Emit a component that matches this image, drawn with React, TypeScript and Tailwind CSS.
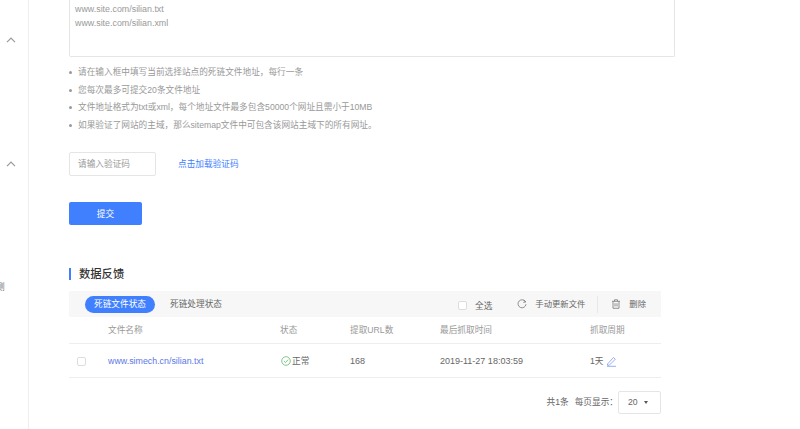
import React from "react";

function Box({ className = "" }: { className?: string }) {
  return <span className={"block w-[9px] h-[9px] rounded-[2px] border border-[#dddddd] bg-white " + className} />;
}

function Chevron() {
  return (
    <svg width="10" height="6" viewBox="0 0 10 6" fill="none" stroke="#999999" strokeWidth="1.2">
      <path d="M1 5.2 L5 1.2 L9 5.2" />
    </svg>
  );
}

const tips = [
  "请在输入框中填写当前选择站点的死链文件地址，每行一条",
  "您每次最多可提交20条文件地址",
  "文件地址格式为txt或xml，每个地址文件最多包含50000个网址且需小于10MB",
  "如果验证了网站的主域，那么sitemap文件中可包含该网站主域下的所有网址。",
];

export default function App() {
  return (
    <div className="flex h-[429px] w-[800px] overflow-hidden bg-white text-[8.67px] leading-[13px] text-[#666666] font-['Liberation_Sans','Noto_Sans_CJK_SC',sans-serif]">
      <aside className="w-[29px] shrink-0 border-r border-[#eeeeee] overflow-hidden">
        <div className="flex justify-center pr-[6px] pt-[37px]"><Chevron /></div>
        <div className="flex justify-center pr-[6px] pt-[118px]"><Chevron /></div>
        <div className="pt-[114px] -ml-[4px] text-[#777777]">测</div>
      </aside>

      <main className="w-[606px] ml-[40px]">
        <div className="h-[57px] border-x border-b border-[#e5e5e5] rounded-b-[2px] pl-[5px] pt-[2px] text-[#999999] text-[8.9px] leading-[14px]">
          <div>www.site.com/silian.txt</div>
          <div>www.site.com/silian.xml</div>
        </div>

        <ul className="pt-[7px] text-[#999999]">
          {tips.map((t) => (
            <li key={t} className="flex items-center h-[17.5px]">
              <span className="w-[3px] h-[3px] rounded-full bg-[#999999] mr-[6px]" />
              <span>{t}</span>
            </li>
          ))}
        </ul>

        <div className="flex items-center mt-[18px]">
          <div className="w-[87px] h-[24px] border border-[#e5e5e5] rounded-[2px] pl-[8px] flex items-center text-[#999999]">请输入验证码</div>
          <a className="ml-[22px] text-[#4080ff]">点击加载验证码</a>
        </div>

        <button className="block mt-[26px] w-[73px] h-[23px] pt-[1px] bg-[#4080ff] rounded-[2px] text-white">提交</button>

        <div className="flex items-center mt-[42px] h-[13px]">
          <span className="w-[2px] h-[12px] bg-[#4080ff]" />
          <h2 className="ml-[8px] pt-[2px] text-[11.3px] font-medium text-[#333333]">数据反馈</h2>
        </div>

        <section className="w-[592px] mt-[11px]">
          <div className="flex items-center h-[26px] bg-[#f7f7f7] pl-[16px] pr-[15px]">
            <span className="w-[70px] h-[17px] rounded-full bg-[#4080ff] text-white flex items-center justify-center">死链文件状态</span>
            <span className="ml-[15px]">死链处理状态</span>
            <Box className="ml-auto mt-[3px]" />
            <span className="ml-[8px] mt-[4px]">全选</span>
            <svg className="ml-[25px]" width="10" height="10" viewBox="0 0 10 10" fill="none" stroke="#777777" strokeWidth="0.8">
              <path d="M8.6 3 A4 4 0 1 0 9 5.2" />
              <path d="M6.8 0.8 L8.8 3 L6.3 3.4" />
            </svg>
            <span className="ml-[8px] text-[8.33px]">手动更新文件</span>
            <span className="ml-[12px] w-px h-[17px] bg-[#e8e8e8]" />
            <svg className="ml-[13px]" width="10" height="10" viewBox="0 0 10 10" fill="none" stroke="#777777" strokeWidth="0.8">
              <path d="M1 2.3 H9 M3.5 2.3 V0.8 H6.5 V2.3 M2 2.3 V9.3 H8 V2.3 M4 4.2 V7.5 M6 4.2 V7.5" />
            </svg>
            <span className="ml-[8px] text-[8.33px]">删除</span>
          </div>

          <div className="grid grid-cols-[39px_172px_70px_90px_150px_1fr] items-center h-[27px] border-b border-[#eeeeee] text-[#999999]">
            <span />
            <span>文件名称</span>
            <span>状态</span>
            <span>提取URL数</span>
            <span>最后抓取时间</span>
            <span>抓取周期</span>
          </div>

          <div className="grid grid-cols-[39px_172px_70px_90px_150px_1fr] items-center h-[34px] pt-[1px] border-b border-[#eeeeee]">
            <Box className="ml-[8px]" />
            <a className="text-[#5b78e6] text-[8.85px]">www.simech.cn/silian.txt</a>
            <span className="flex items-center">
              <svg className="ml-[1px] mr-[1px]" width="10" height="10" viewBox="0 0 10 10" fill="none" stroke="#62b76f" strokeWidth="0.8">
                <circle cx="5" cy="5" r="4.3" />
                <path d="M2.9 5.1 L4.5 6.6 L7.2 3.6" />
              </svg>
              正常
            </span>
            <span className="text-[9px]">168</span>
            <span className="text-[9px]">2019-11-27 18:03:59</span>
            <span className="flex items-center">
              1天
              <svg className="ml-[3px]" width="11" height="11" viewBox="0 0 11 11" fill="none" stroke="#7c9cf0" strokeWidth="0.8">
                <path d="M1.5 8 L7.5 1.5 L9.3 3.2 L3.2 9.3 H1.5 Z M1 10.3 H10" />
              </svg>
            </span>
          </div>

          <div className="flex items-center justify-end mt-[13px]">
            <span>共1条</span>
            <span className="ml-[6px]">每页显示：</span>
            <div className="w-[43px] h-[23px] border border-[#e5e5e5] rounded-[2px] flex items-center pl-[9px]">
              20
              <span className="ml-[6px] w-0 h-0 border-x-[2.5px] border-x-transparent border-t-[3px] border-t-[#555555]" />
            </div>
          </div>
        </section>
      </main>
    </div>
  );
}
